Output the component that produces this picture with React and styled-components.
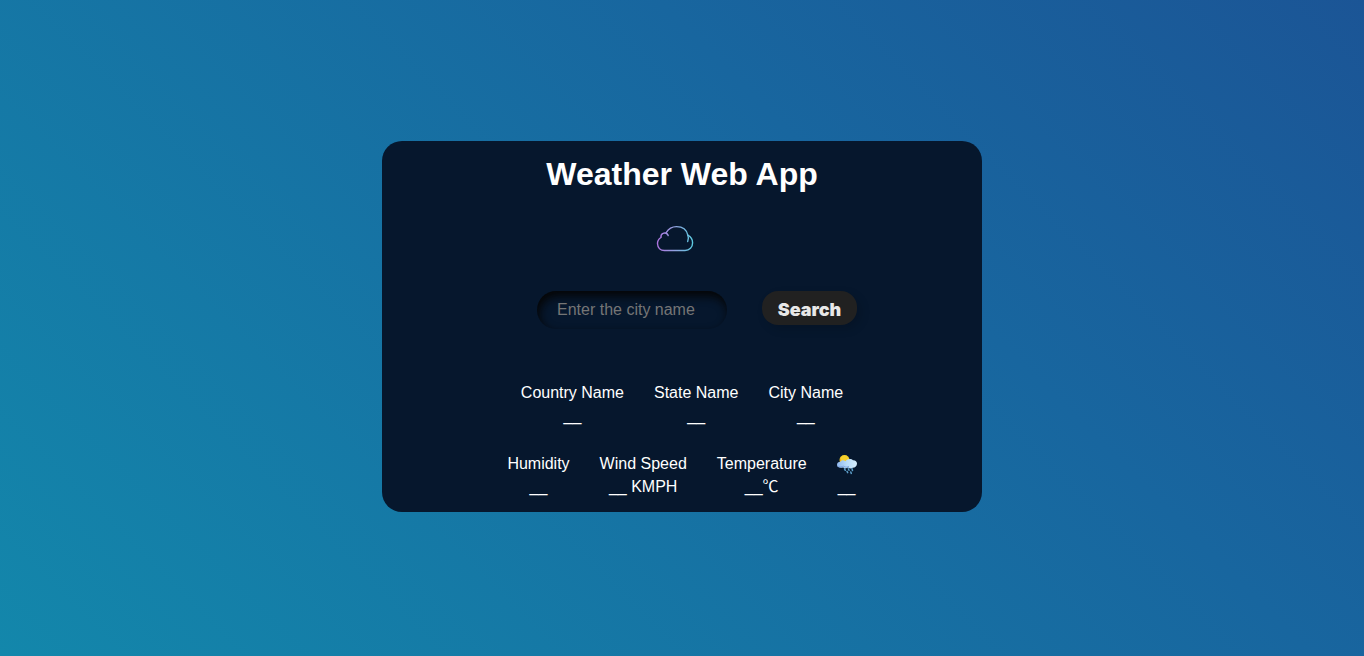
import React from 'react';
import styled, { createGlobalStyle } from 'styled-components';

const GlobalStyle = createGlobalStyle`
  *, *::before, *::after { box-sizing: border-box; }
  body {
    margin: 0;
    font-family: Arial, "Liberation Sans", "Liberation Serif", "Noto Sans CJK SC", sans-serif;
    font-size: 16px;
    line-height: 23px;
    color: #fff;
  }
`;

const Page = styled.main`
  display: flex;
  align-items: center;
  justify-content: center;
  min-height: 100vh;
  padding-bottom: 3px;
  background: linear-gradient(45deg, #1387ab 0%, #18669f 65%, #1b5596 100%);
`;

const Card = styled.section`
  display: flex;
  flex-direction: column;
  align-items: center;
  width: 100%;
  max-width: 600px;
  padding: 14px 16px;
  border-radius: 20px;
  background: #06172d;
`;

const Title = styled.h1`
  margin: 0;
  font-size: 32px;
  line-height: 38px;
`;

const CloudIcon = styled.svg`
  width: 50px;
  height: 50px;
  margin: 20px 14px 0 0;
`;

const SearchForm = styled.form`
  display: flex;
  align-items: flex-start;
  gap: 35px;
  margin: 28px 0 0 30px;
`;

const CityInput = styled.input`
  width: 190px;
  height: 38px;
  padding: 0 20px;
  border: 0;
  outline: 0;
  border-radius: 20px;
  background: transparent;
  box-shadow: inset 2px 5px 10px #050505;
  color: #fff;
  font: inherit;
  &::placeholder { color: #757575; opacity: 1; }
`;

const SearchButton = styled.button`
  width: 95px;
  height: 34px;
  padding: 2px 0 0;
  border: 0;
  border-radius: 16px;
  background: #212121;
  box-shadow: 4px 4px 10px rgba(0, 0, 0, 0.15);
  color: #e8e8e8;
  font: 900 18px "Arial Black", Inter, sans-serif;
  cursor: pointer;
`;

const Readings = styled.dl`
  display: flex;
  flex-wrap: wrap;
  justify-content: center;
  gap: 30px;
  margin: ${({ $top }) => $top}px 0 0;
`;

const Reading = styled.div`
  text-align: center;
`;

const Label = styled.dt`
  display: flex;
  justify-content: center;
  height: 23px;
`;

const Value = styled.dd`
  margin: 0;
`;

const WeatherIcon = styled.svg`
  width: 20px;
  height: 22px;
  margin-top: 2px;
`;

const places = ['Country Name', 'State Name', 'City Name'];
const conditions = [
  ['Humidity', '__'],
  ['Wind Speed', '__ KMPH'],
  ['Temperature', '__℃'],
];

function Cloud() {
  return (
    <CloudIcon viewBox="0 0 50 50" fill="none" aria-hidden="true">
      <defs>
        <linearGradient id="cloud" x1="7" y1="0" x2="43" y2="0" gradientUnits="userSpaceOnUse">
          <stop stopColor="#ae72e0" />
          <stop offset="0.5" stopColor="#91a2df" />
          <stop offset="1" stopColor="#5bcbe0" />
        </linearGradient>
      </defs>
      <g stroke="url(#cloud)" strokeWidth="1.4" strokeLinecap="round" strokeLinejoin="round">
        <path d="M18.2 22.5C17.5 20.3 15 19.400 13 20.400c-1.800.8-2.200 2.500-2 4.100-2.500 1.500-3.600 3.700-3.500 6.300.2 4.100 3 6.700 6.900 6.700H35c4.500 0 7.600-3.200 7.600-7.700 0-3.200-1.600-6-4.800-7.700C36.700 16.800 32.600 13.600 26.500 13.600c-4.600 0-8.100 2.300-10.300 6" />
        <path d="M37.800 22.100c.8 2 .8 4.500-.1 6.400" />
      </g>
    </CloudIcon>
  );
}

function RainCloud() {
  return (
    <WeatherIcon viewBox="1 0 20 22" role="img" aria-label="Weather condition">
      <defs>
        <linearGradient id="rain-cloud" x1="0" x2="1">
          <stop stopColor="#91b9ef" />
          <stop offset="0.5" stopColor="#b9dcf9" />
          <stop offset="1" stopColor="#d5edfb" />
        </linearGradient>
      </defs>
      <circle cx="8.500" cy="6" r="5" fill="#f6d02a" />
      <path d="M4 6.500a5 5 0 0 1 1-3v4Z" fill="#f2ac16" />
      <path d="M4.300 7.700c1.100-1.800 3.600-2.100 5.200-.5C11 4.500 15.500 4.300 17 6.200c2.300-.2 4 1.300 4 3.400 0 2.600-1.800 4.200-4.300 4.200-1.500 1-3.300.9-4.700-.2-1.600 1.100-3.600 1-4.800-.1C3.700 14.500 1 13.400 1 10.800c0-1.900 1.500-3.100 3.300-3.100Z" fill="url(#rain-cloud)" />
      <path d="M1.500 12c1.800 1.300 4.300.6 6 .2 2.500 1.500 4 .8 5.500.1" fill="none" stroke="#82aae4" strokeWidth="1" />
      <path d="m8.500 14.800.8 1.500m3-1.500.7 1.500m3-1.500.5 1.700m-5.500.8.7 1.300m3.100-.7.5 1.500" stroke="#5d9fc9" strokeWidth="1.500" strokeLinecap="round" />
    </WeatherIcon>
  );
}

export default function App() {
  return (
    <>
      <GlobalStyle />
      <Page>
        <Card>
          <Title>Weather Web App</Title>
          <Cloud />
          <SearchForm onSubmit={(event) => event.preventDefault()}>
            <CityInput type="text" placeholder="Enter the city name" aria-label="City name" />
            <SearchButton type="submit">Search</SearchButton>
          </SearchForm>
          <Readings $top={52}>
            {places.map((name) => (
              <Reading key={name}>
                <Label>{name}</Label>
                <Value>__</Value>
              </Reading>
            ))}
          </Readings>
          <Readings $top={25}>
            {conditions.map(([name, value]) => (
              <Reading key={name}>
                <Label>{name}</Label>
                <Value>{value}</Value>
              </Reading>
            ))}
            <Reading>
              <Label><RainCloud /></Label>
              <Value>__</Value>
            </Reading>
          </Readings>
        </Card>
      </Page>
    </>
  );
}
